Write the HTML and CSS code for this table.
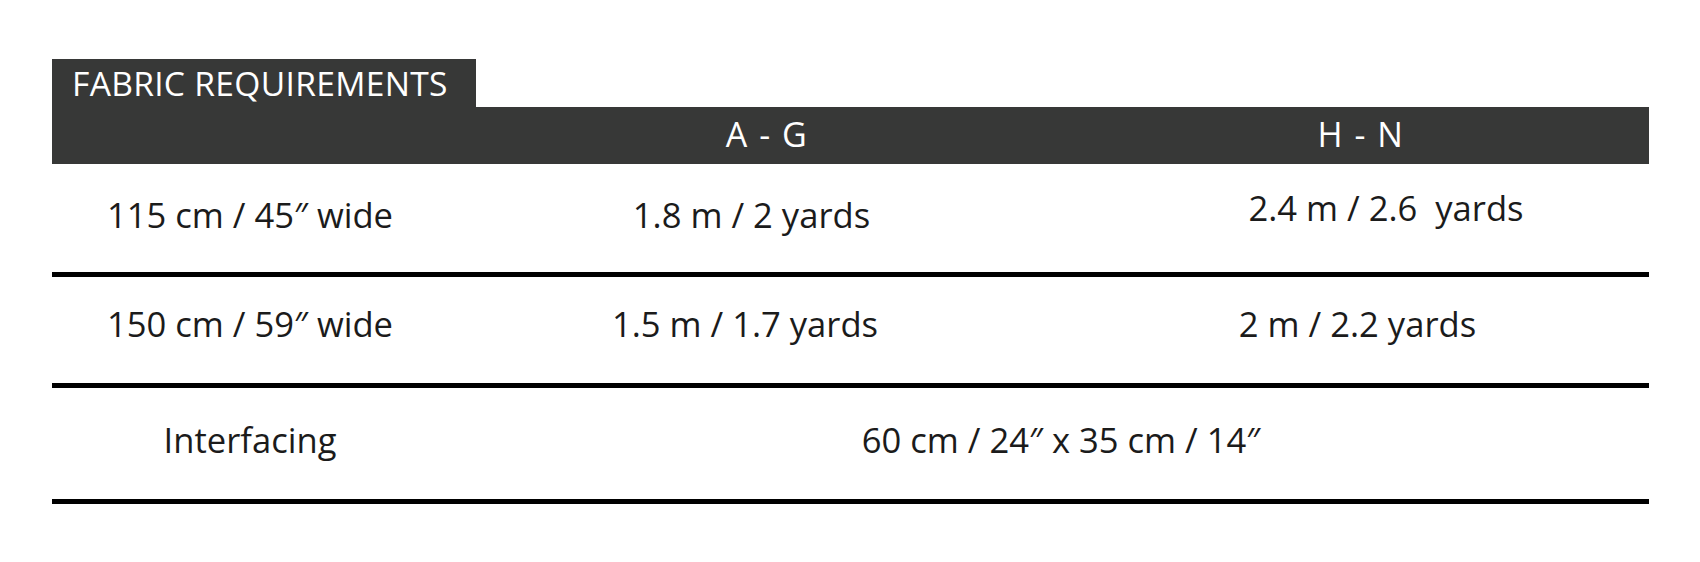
FILE: index.html
```html
<!DOCTYPE html>
<html lang="en">
<head>
<meta charset="utf-8">
<title>Fabric Requirements</title>
<link rel="stylesheet" href="styles.css">
</head>
<body>
<div class="sheet">
  <div class="tab">FABRIC REQUIREMENTS</div>
  <div class="head">
    <div class="hcell"></div>
    <div class="hcell hcell-ag">A - G</div>
    <div class="hcell hcell-hn">H - N</div>
  </div>
  <div class="row row-1">
    <div class="cell">115 cm / 45″ wide</div>
    <div class="cell cell-mid">1.8 m / 2 yards</div>
    <div class="cell cell-raised">2.4 m / 2.6&nbsp; yards</div>
  </div>
  <div class="row row-2">
    <div class="cell">150 cm / 59″ wide</div>
    <div class="cell cell-left">1.5 m / 1.7 yards</div>
    <div class="cell cell-right">2 m / 2.2 yards</div>
  </div>
  <div class="row row-3">
    <div class="cell">Interfacing</div>
    <div class="cell cell-wide">60 cm / 24″ x 35 cm / 14″</div>
  </div>
</div>
</body>
</html>
```

FILE: styles.css
```css
html, body {
  margin: 0;
  padding: 0;
  background: #ffffff;
}

body {
  font-family: "Open Sans", "Noto Sans", "DejaVu Sans", sans-serif;
  color: #1b1b1b;
}

.sheet {
  width: 1597px;
  padding: 59px 0 0 52px;
}

.tab {
  width: 424px;
  height: 48px;
  box-sizing: border-box;
  padding-left: 20px;
  display: flex;
  align-items: center;
  background: #373837;
  color: #ffffff;
  font-size: 33.6px;
  letter-spacing: 0.3px;
  white-space: nowrap;
}

.head {
  display: grid;
  grid-template-columns: 396px 612px 1fr;
  height: 57px;
  background: #373837;
  color: #ffffff;
}

.hcell {
  display: flex;
  align-items: center;
  justify-content: center;
  font-size: 34px;
  letter-spacing: 1.5px;
  padding-bottom: 4px;
  white-space: nowrap;
}

.hcell-ag {
  padding-left: 26px;
}

.hcell-hn {
  padding-left: 13px;
}

.row {
  display: grid;
  grid-template-columns: 396px 612px 1fr;
  border-bottom: 5px solid #000000;
  box-sizing: content-box;
}

.row-1 {
  height: 108px;
}

.row-2 {
  height: 106px;
}

.row-3 {
  height: 111px;
}

.cell {
  display: flex;
  align-items: center;
  justify-content: center;
  font-size: 34.6px;
  white-space: nowrap;
  padding-bottom: 8px;
}

.row-2 .cell {
  padding-bottom: 14px;
}

.cell-mid {
  padding-right: 5px;
}

.cell-raised {
  padding-left: 63px;
  padding-bottom: 22px;
}

.row-2 .cell-left {
  padding-right: 18px;
}

.row-2 .cell-right {
  padding-left: 6px;
}

.cell-wide {
  grid-column: 2 / 4;
  padding-left: 25px;
}
```
